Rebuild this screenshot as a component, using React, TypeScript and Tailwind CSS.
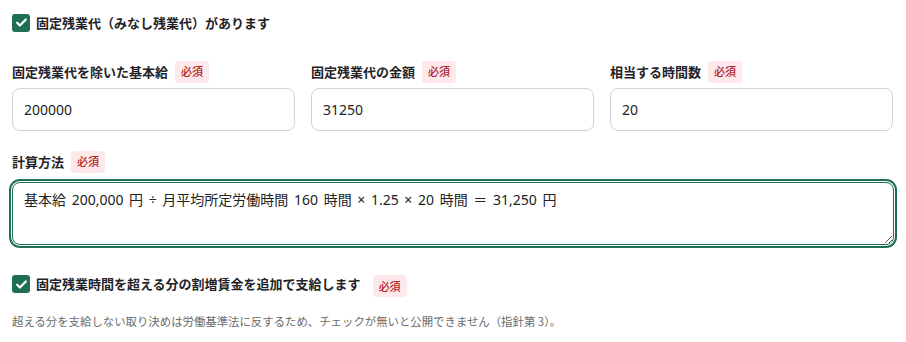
import React from 'react';

const font = { fontFamily: '"Noto Sans CJK JP", "Noto Sans", sans-serif' };
const valueFont = { fontFamily: '"Noto Sans", "Noto Sans CJK JP", sans-serif' };

const Badge: React.FC = () => (
  <span className="inline-flex items-center h-[22px] px-[6px] rounded bg-[#fde9ea] text-[#b0202a] text-[11px] font-medium">
    必須
  </span>
);

const CheckBox: React.FC = () => (
  <span className="flex items-center justify-center w-[18px] h-[18px] rounded-[3px] bg-[#1e6f55] shrink-0">
    <svg width="13" height="13" viewBox="0 0 24 24" fill="none" stroke="white" strokeWidth="4.2" strokeLinecap="round" strokeLinejoin="round">
      <path d="M4 12.5l5 5L20 6.5" />
    </svg>
  </span>
);

const Field: React.FC<{ label: string; value: string }> = ({ label, value }) => (
  <div className="flex flex-col">
    <div className="flex items-center gap-[7px] h-[22px]">
      <span className="text-[13px] font-semibold text-[#1f2328]">{label}</span>
      <Badge />
    </div>
    <input
      readOnly
      value={value}
      className="mt-[5px] h-[43px] w-full rounded-lg border border-[#cfd3d8] bg-white px-[11px] text-[14px] text-[#222] outline-none"
      style={valueFont}
    />
  </div>
);

export default function App() {
  return (
    <div className="min-h-screen bg-white px-3 pt-[13px] text-[#1f2328]" style={font}>
      <div className="flex items-center gap-[6px]">
        <CheckBox />
        <span className="text-[13px] font-semibold">固定残業代（みなし残業代）があります</span>
      </div>

      <div className="grid grid-cols-3 gap-4 mt-[28px] w-[881px]">
        <Field label="固定残業代を除いた基本給" value="200000" />
        <Field label="固定残業代の金額" value="31250" />
        <Field label="相当する時間数" value="20" />
      </div>

      <div className="mt-[20px] flex items-center gap-[7px] h-[22px]">
        <span className="text-[13px] font-semibold">計算方法</span>
        <Badge />
      </div>
      <textarea
        readOnly
        value="基本給 200,000 円 ÷ 月平均所定労働時間 160 時間 × 1.25 × 20 時間 ＝ 31,250 円"
        className="mt-[9px] block h-[63px] w-[882px] rounded-lg border border-[#1e6f55] bg-white px-[11px] pt-[7px] text-[14px] leading-5 text-[#222] outline-none ring-2 ring-[#1e6f55] ring-offset-1 [word-spacing:2px]"
        style={valueFont}
      />

      <div className="mt-[27px] flex items-center">
        <CheckBox />
        <span className="ml-[6px] text-[13px] font-semibold">固定残業時間を超える分の割増賃金を追加で支給します</span>
        <span className="ml-[12px]"><Badge /></span>
      </div>
      <p className="mt-[15px] text-[11.4px] leading-[18px] text-[#6b6b6b]">
        超える分を支給しない取り決めは労働基準法に反するため、チェックが無いと公開できません（指針第 3）。
      </p>
    </div>
  );
}
